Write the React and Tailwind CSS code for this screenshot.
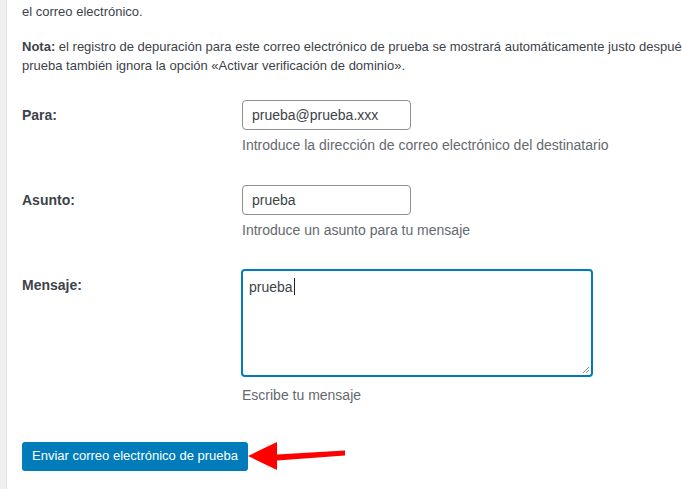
export default function App() {
  const font = { fontFamily: '"Liberation Sans", Arial, sans-serif' };
  return (
    <div className="flex h-[489px] w-[682px] overflow-hidden bg-white text-[#3c434a]" style={font}>
      <div className="w-[7px] shrink-0 border-r border-[#e2e4e7] bg-[#f0f0f1]" />
      <div className="flex min-w-0 flex-1 flex-col pl-[15px]">
        <p className="mt-[2px] whitespace-nowrap text-[13px] leading-[20px]">el correo electrónico.</p>
        <p className="mt-[15px] whitespace-nowrap text-[13px] leading-[19px]">
          <strong className="font-bold">Nota:</strong> el registro de depuración para este correo electrónico de prueba se mostrará automáticamente justo después
          <br />
          prueba también ignora la opción «Activar verificación de dominio».
        </p>

        <div className="mt-[25px] flex">
          <div className="w-[220px] shrink-0 pt-[7px] text-[14px] font-bold leading-[16px]">Para:</div>
          <div className="flex flex-col">
            <div className="flex h-[30px] w-[169px] items-center rounded-[4px] border border-[#8c8f94] px-[9px] text-[14px]">
              prueba@prueba.xxx
            </div>
            <div className="mt-[6px] text-[14px] leading-[18px] text-[#646970]">
              Introduce la dirección de correo electrónico del destinatario
            </div>
          </div>
        </div>

        <div className="mt-[31px] flex">
          <div className="w-[220px] shrink-0 pt-[7px] text-[14px] font-bold leading-[16px]">Asunto:</div>
          <div className="flex flex-col">
            <div className="flex h-[30px] w-[169px] items-center rounded-[4px] border border-[#8c8f94] px-[9px] text-[14px]">
              prueba
            </div>
            <div className="mt-[6px] text-[14px] leading-[18px] text-[#646970]">
              Introduce un asunto para tu mensaje
            </div>
          </div>
        </div>

        <div className="mt-[30px] flex">
          <div className="w-[219px] shrink-0 pt-[8px] text-[14px] font-bold leading-[16px]">Mensaje:</div>
          <div className="flex flex-col">
            <div className="relative h-[108px] w-[352px] rounded-[4px] border-2 border-[#007cba] px-[6px] pt-[4px] text-[14px] leading-[16px]">
              <span>prueba</span>
              <span className="ml-px inline-block h-[17px] w-px translate-y-[3px] bg-[#222]" />
              <svg className="absolute bottom-[1px] right-[1px]" width="9" height="9" viewBox="0 0 9 9">
                <path d="M8 2 L2 8 M8 5 L5 8" stroke="#888" strokeWidth="1" />
              </svg>
            </div>
            <div className="ml-px mt-[9px] text-[14px] leading-[18px] text-[#646970]">Escribe tu mensaje</div>
          </div>
        </div>

        <div className="mt-[36px] flex items-center">
          <button className="h-[29px] w-[226px] rounded-[3px] bg-[#007cba] text-[13px] text-white">
            Enviar correo electrónico de prueba
          </button>
          <svg width="100" height="32" viewBox="0 0 100 32" className="ml-[-1px]">
            <path d="M30 14.5 L98 10.5 L98 15.5 L30 20.5 Z" fill="#f00" />
            <path d="M1 16 L30 2 L30 30 Z" fill="#f00" />
          </svg>
        </div>
      </div>
    </div>
  );
}
